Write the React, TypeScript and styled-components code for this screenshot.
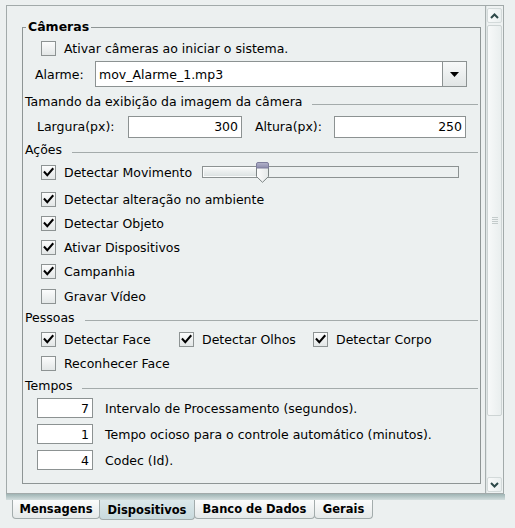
import React from "react";
import styled, { createGlobalStyle } from "styled-components";

const GlobalStyle = createGlobalStyle`
  html, body { margin: 0; padding: 0; background: #ecf0f0; }
  body {
    font-family: "DejaVu Sans", Verdana, sans-serif;
    font-size: 12.5px;
    color: #000;
  }
`;

const Page = styled.div`
  width: 515px;
  height: 528px;
  box-sizing: border-box;
  padding: 5px 11px 0 6px;
  display: flex;
  flex-direction: column;
`;

const Frame = styled.div`
  height: 489px;
  box-sizing: border-box;
  border: 1px solid #a2aaaa;
  display: flex;
  background: #ecf0f0;
`;

const Viewport = styled.div`
  flex: 1;
  padding: 13px 4px 0 15px;
  overflow: hidden;
`;

const Fieldset = styled.fieldset`
  margin: 0;
  padding: 0 2px 10px 2px;
  border: 1px solid #8e9595;
  min-width: 0;
  display: flex;
  flex-direction: column;
`;

const Legend = styled.legend`
  padding: 0 2px;
  margin-left: 1px;
  font-weight: bold;
  font-size: 12.5px;
  line-height: 16px;
`;

const Row = styled.div<{ $h: number; $indent?: number; $mt?: number }>`
  height: ${(p) => p.$h}px;
  margin-top: ${(p) => p.$mt ?? 0}px;
  padding-left: ${(p) => p.$indent ?? 16}px;
  display: flex;
  align-items: center;
  white-space: nowrap;
`;

const CheckItem = styled.label`
  display: flex;
  align-items: center;
  gap: 8px;
`;

const Box = styled.span`
  width: 15px;
  height: 15px;
  box-sizing: border-box;
  border: 1px solid #8d9393;
  background: linear-gradient(#fbfcfc, #e3e7e7);
  display: inline-flex;
  align-items: center;
  justify-content: center;
  flex: none;
`;

const Check = ({ checked, label }: { checked?: boolean; label: string }) => (
  <CheckItem>
    <Box>
      {checked && (
        <svg width="13" height="13" viewBox="0 0 13 13">
          <path d="M2.6 6.2 L5.3 9.2 L10.6 3" stroke="#000" strokeWidth="2" fill="none" strokeLinecap="square" />
        </svg>
      )}
    </Box>
    <span>{label}</span>
  </CheckItem>
);

const SectionHeader = styled.div<{ $h: number }>`
  height: ${(p) => p.$h}px;
  display: flex;
  align-items: center;
  white-space: nowrap;
`;

const Rule = styled.div`
  flex: 1;
  height: 1px;
  background: #a4abab;
  margin: 6px 0 0 10px;
`;

const Label = styled.span<{ $w?: number; $ml?: number }>`
  display: inline-block;
  width: ${(p) => (p.$w ? `${p.$w}px` : "auto")};
  margin-left: ${(p) => p.$ml ?? 0}px;
  flex: none;
`;

const Combo = styled.div`
  width: 372px;
  height: 26px;
  box-sizing: border-box;
  border: 1px solid #8c9292;
  background: #fff;
  display: flex;
`;

const ComboText = styled.div`
  flex: 1;
  padding-left: 3px;
  display: flex;
  align-items: center;
`;

const ComboButton = styled.div`
  width: 23px;
  border-left: 1px solid #8c9292;
  background: linear-gradient(#f7f9f9, #e1e5e5);
  display: flex;
  align-items: center;
  justify-content: center;
`;

const Field = styled.div<{ $w: number; $h: number }>`
  width: ${(p) => p.$w}px;
  height: ${(p) => p.$h}px;
  box-sizing: border-box;
  border: 1px solid #8c9292;
  background: #fff;
  display: flex;
  align-items: center;
  justify-content: flex-end;
  padding-right: 3px;
  flex: none;
`;

const SliderTrack = styled.div`
  position: relative;
  width: 257px;
  height: 12px;
  box-sizing: border-box;
  border: 1px solid #8c9292;
  background: #ecf0f0;
  margin-left: 10px;
  flex: none;
`;

const SliderFill = styled.div`
  height: 100%;
  box-sizing: border-box;
  border: 1px solid #fafcfc;
  background: linear-gradient(#f6f8f8, #dde3e3);
`;

const SliderThumb = styled.svg`
  position: absolute;
  top: -5px;
`;

const Slider = ({ value }: { value: number }) => {
  const px = Math.round(value * 255);
  return (
    <SliderTrack>
      <SliderFill style={{ width: px + "px" }} />
      <SliderThumb width="13" height="21" viewBox="0 0 13 21" style={{ left: px - 7 + "px" }}>
        <defs>
          <linearGradient id="cap" x1="0" y1="0" x2="0" y2="1">
            <stop offset="0" stopColor="#b4b4cc" />
            <stop offset="1" stopColor="#8c8cac" />
          </linearGradient>
          <linearGradient id="body" x1="0" y1="0" x2="1" y2="0">
            <stop offset="0" stopColor="#fdfdfd" />
            <stop offset="1" stopColor="#e4e8e8" />
          </linearGradient>
        </defs>
        <path d="M0.5 5 L0.5 14.5 L6.5 20.3 L12.5 14.5 L12.5 5 Z" fill="url(#body)" stroke="#7c8484" />
        <path d="M0.5 6 L0.5 2 Q0.5 0.5 2 0.5 L11 0.5 Q12.5 0.5 12.5 2 L12.5 6 Z" fill="url(#cap)" stroke="#7e7e9c" />
      </SliderThumb>
    </SliderTrack>
  );
};

const PeopleGrid = styled.div`
  display: grid;
  grid-template-columns: 138px 134px auto;
  align-items: center;
`;

const ScrollBar = styled.div`
  width: 18px;
  box-sizing: border-box;
  border-left: 1px solid #a7afaf;
  box-shadow: inset 1px 0 0 #dfe5e5;
  display: flex;
  flex-direction: column;
  align-items: flex-end;
  padding: 2px 1px 1px 0;
  background: #eef2f2;
`;

const ArrowButton = styled.div`
  width: 15px;
  height: 15px;
  box-sizing: border-box;
  border: 1px solid #d3dada;
  border-radius: 2px;
  background: linear-gradient(to right, #f8fafa, #eaefef);
  display: flex;
  align-items: center;
  justify-content: center;
  flex: none;
`;

const Thumb = styled.div`
  margin-top: 2px;
  width: 15px;
  height: 391px;
  box-sizing: border-box;
  border: 1px solid #cdd4d4;
  border-radius: 2px;
  background: linear-gradient(to right, #f7f9f9, #e9eeee);
  display: flex;
  flex-direction: column;
  align-items: center;
  justify-content: center;
  gap: 1px;
`;

const Grip = styled.div`
  width: 6px;
  height: 1px;
  background: #c3cbcb;
`;

const Track = styled.div`
  flex: 1;
`;

const FrameShadow = styled.div`
  height: 6px;
  margin-right: -1px;
  background: linear-gradient(#9fb4b4, #d3dede);
`;

const TabRow = styled.div`
  display: flex;
  align-items: flex-start;
  padding-left: 6px;
`;

const Tab = styled.div<{ $active?: boolean; $w: number }>`
  width: ${(p) => p.$w}px;
  height: ${(p) => (p.$active ? 20 : 19)}px;
  box-sizing: border-box;
  margin-left: -1px;
  border: 1px solid #a3acac;
  border-top: none;
  border-radius: 0 0 4px 4px;
  background: ${(p) =>
    p.$active ? "linear-gradient(#dbe8ea, #c9dadd)" : "linear-gradient(#fbfcfc, #e5e9e9)"};
  font-weight: bold;
  font-size: 11.5px;
  display: flex;
  align-items: center;
  justify-content: center;
  white-space: nowrap;
  &:first-child { margin-left: 0; }
`;

export default function App() {
  return (
    <>
      <GlobalStyle />
      <Page>
        <Frame>
          <Viewport>
            <Fieldset>
              <Legend>Câmeras</Legend>
              <Row $h={26}>
                <Check label="Ativar câmeras ao iniciar o sistema." />
              </Row>
              <Row $h={26} $indent={10}>
                <Label $w={60}>Alarme:</Label>
                <Combo>
                  <ComboText>mov_Alarme_1.mp3</ComboText>
                  <ComboButton>
                    <svg width="9" height="5" viewBox="0 0 9 5">
                      <path d="M0 0 L9 0 L4.5 5 Z" fill="#000" />
                    </svg>
                  </ComboButton>
                </Combo>
              </Row>
              <SectionHeader $h={28}>
                Tamando da exibição da imagem da câmera
                <Rule />
              </SectionHeader>
              <Row $h={23} $indent={12}>
                <Label $w={91}>Largura(px):</Label>
                <Field $w={114} $h={22}>300</Field>
                <Label $w={79} $ml={13}>Altura(px):</Label>
                <Field $w={132} $h={22}>250</Field>
              </Row>
              <SectionHeader $h={22}>
                Ações
                <Rule />
              </SectionHeader>
              <Row $h={24}>
                <Check checked label="Detectar Movimento" />
                <Slider value={0.235} />
              </Row>
              <Row $h={24} $mt={3}>
                <Check checked label="Detectar alteração no ambiente" />
              </Row>
              <Row $h={24}>
                <Check checked label="Detectar Objeto" />
              </Row>
              <Row $h={24}>
                <Check checked label="Ativar Dispositivos" />
              </Row>
              <Row $h={24}>
                <Check checked label="Campanhia" />
              </Row>
              <Row $h={24} $mt={1}>
                <Check label="Gravar Vídeo" />
              </Row>
              <SectionHeader $h={19}>
                Pessoas
                <Rule />
              </SectionHeader>
              <Row $h={24}>
                <PeopleGrid>
                  <Check checked label="Detectar Face" />
                  <Check checked label="Detectar Olhos" />
                  <Check checked label="Detectar Corpo" />
                </PeopleGrid>
              </Row>
              <Row $h={24}>
                <Check label="Reconhecer Face" />
              </Row>
              <SectionHeader $h={20}>
                Tempos
                <Rule />
              </SectionHeader>
              <Row $h={26} $indent={12}>
                <Field $w={56} $h={20}>7</Field>
                <Label $ml={12}>Intervalo de Processamento (segundos).</Label>
              </Row>
              <Row $h={26} $indent={12}>
                <Field $w={56} $h={20}>1</Field>
                <Label $ml={12}>Tempo ocioso para o controle automático (minutos).</Label>
              </Row>
              <Row $h={26} $indent={12}>
                <Field $w={56} $h={20}>4</Field>
                <Label $ml={12}>Codec (Id).</Label>
              </Row>
            </Fieldset>
          </Viewport>
          <ScrollBar>
            <ArrowButton>
              <svg width="9" height="6" viewBox="0 0 9 6">
                <path d="M1 5 L4.5 1.5 L8 5" stroke="#2c4848" strokeWidth="2" fill="none" />
              </svg>
            </ArrowButton>
            <Thumb>
              <Grip />
              <Grip />
              <Grip />
              <Grip />
            </Thumb>
            <Track />
            <ArrowButton>
              <svg width="9" height="6" viewBox="0 0 9 6">
                <path d="M1 1 L4.5 4.5 L8 1" stroke="#2c4848" strokeWidth="2" fill="none" />
              </svg>
            </ArrowButton>
          </ScrollBar>
        </Frame>
        <FrameShadow />
        <TabRow>
          <Tab $w={88}>Mensagens</Tab>
          <Tab $w={96} $active>Dispositivos</Tab>
          <Tab $w={121}>Banco de Dados</Tab>
          <Tab $w={59}>Gerais</Tab>
        </TabRow>
      </Page>
    </>
  );
}
